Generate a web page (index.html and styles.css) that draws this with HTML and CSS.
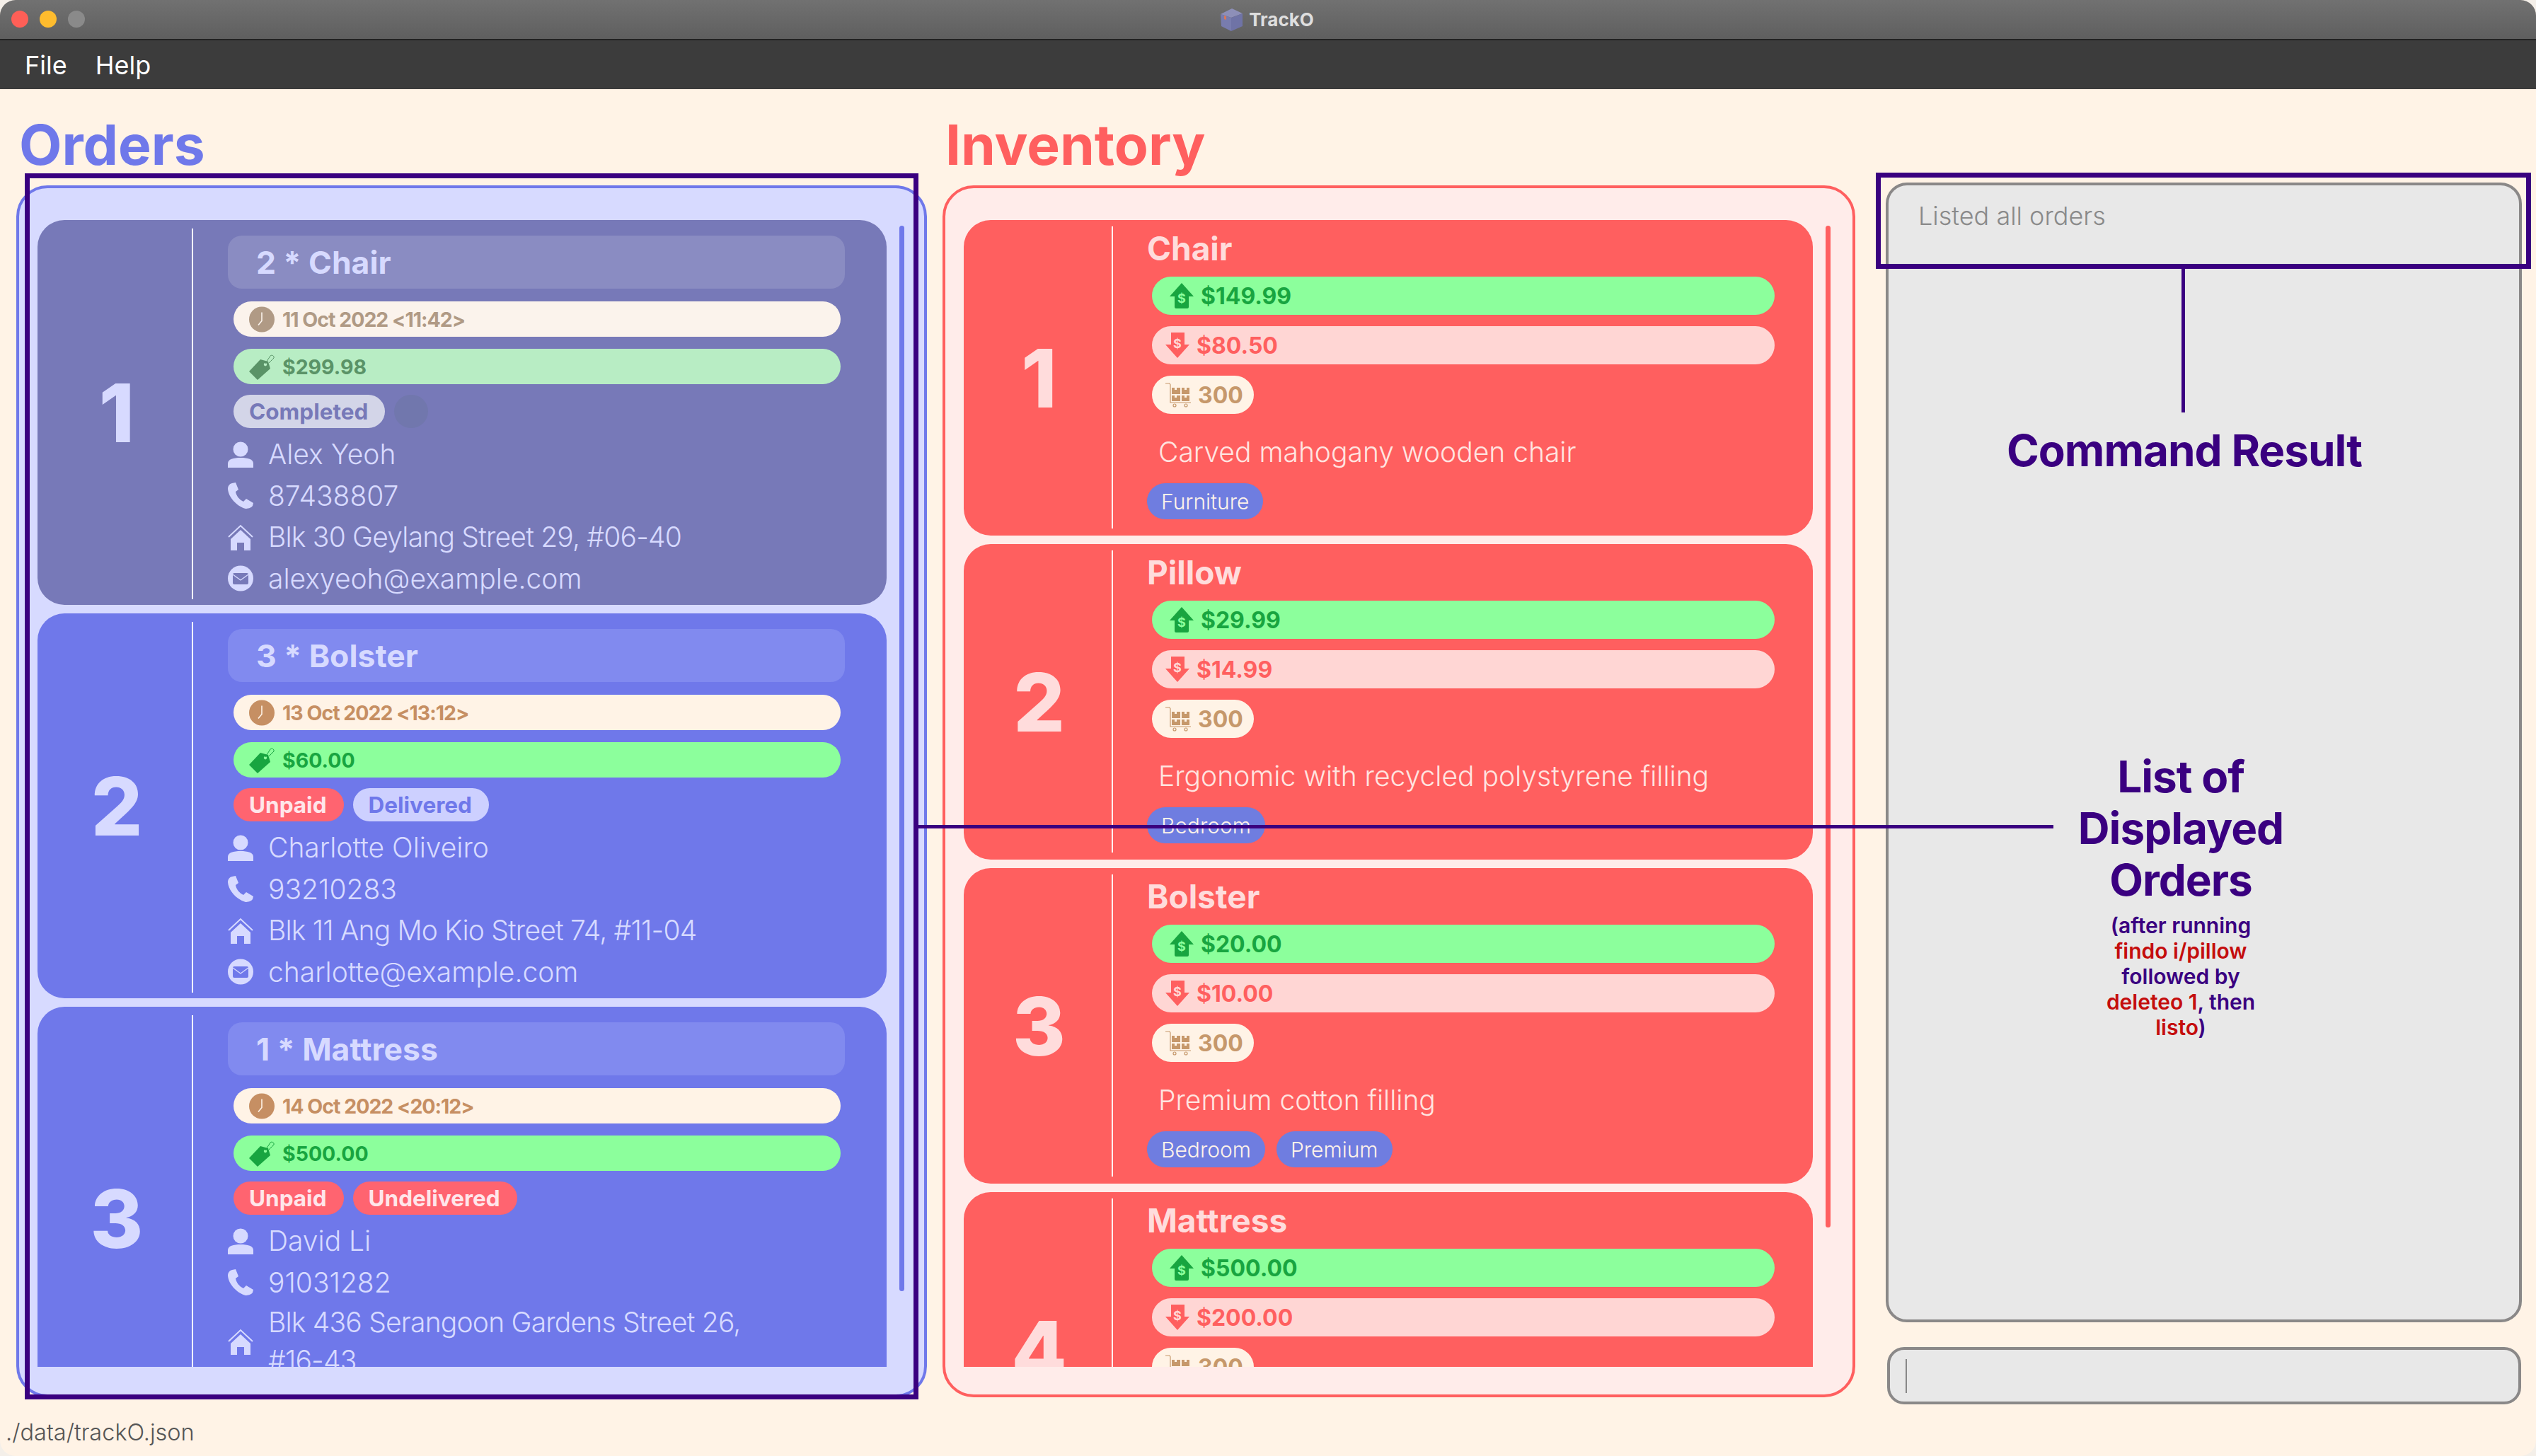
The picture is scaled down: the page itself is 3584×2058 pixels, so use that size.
FILE: index.html
```html
<!DOCTYPE html>
<html>
<head>
    <title>TrackO</title>
    <meta charset="UTF-8">
    <link rel="stylesheet" href="styles.css">
</head>
<body>
    <svg class="sprites" width="0" height="0">
        <symbol id="i-clock" viewBox="0 0 36 36">
            <circle cx="18" cy="18" r="18" fill="currentColor" />
            <path d="M18 8V20L13 26" fill="none" stroke="var(--cut)" stroke-width="1.6" />
        </symbol>
        <symbol id="i-tag" viewBox="0 0 36 37">
            <path fill="currentColor" fill-rule="evenodd" d="M0 25L16 8L27 11L30 21L12 37ZM23 13a2.2 2.2 0 1 0 .01 0Z" />
            <path d="M23 14L30 3C32 1 36 3 35 6L28 13" fill="none" stroke="currentColor" stroke-width="1" />
        </symbol>
        <symbol id="i-up" viewBox="0 0 34 36">
            <path fill="currentColor" d="M17 0L34 19H27V34Q27 36 25 36H9Q7 36 7 34V19H0Z" />
        </symbol>
        <symbol id="i-down" viewBox="0 0 34 36">
            <path fill="currentColor" d="M8 0H27V17H34L17 36L0 17H8Z" />
        </symbol>
        <symbol id="i-cart" viewBox="0 0 36 37">
            <path d="M0 2H6L7 4V29H36" fill="none" stroke="currentColor" stroke-width="1.2" />
            <path fill="currentColor" fill-rule="evenodd" d="M9 8H13V11H16V8H21V17H9ZM23 8H27V11H30V8H34V17H23ZM9 19H13V22H16V19H21V27H9ZM23 19H27V22H30V19H34V27H23Z" />
            <circle cx="13" cy="33" r="2" fill="none" stroke="currentColor" stroke-width="1.2" />
            <circle cx="29" cy="33" r="2" fill="none" stroke="currentColor" stroke-width="1.2" />
        </symbol>
        <symbol id="i-person" viewBox="0 0 36 37">
            <circle cx="18" cy="11" r="10.5" fill="currentColor" />
            <path fill="currentColor" d="M0 37V31C0 25 8 23 18 23C28 23 36 25 36 31V37Z" />
        </symbol>
        <symbol id="i-phone" viewBox="0 0 36 37">
            <path fill="currentColor" d="M6 1L11 0L15 10L11 13C12 19 16 24 22 27L26 23L36 29L35 33C33 36 28 37 25 37C12 33 1 21 0 9C0 5 2 2 6 1Z" />
        </symbol>
        <symbol id="i-house" viewBox="0 0 36 37">
            <path d="M1 18L18 2L35 18" fill="none" stroke="currentColor" stroke-width="2" />
            <path fill="currentColor" fill-rule="evenodd" d="M18 8L32 21V37H23V26H13V37H4V21Z" />
        </symbol>
        <symbol id="i-mail" viewBox="0 0 36 37">
            <circle cx="18" cy="18.5" r="18" fill="currentColor" />
            <rect x="7" y="11" width="22" height="16" rx="2" fill="var(--cut)" />
            <path d="M7 13L18 21L29 13" fill="none" stroke="currentColor" stroke-width="1.4" />
        </symbol>
    </svg>

    <div class="window">
        <div class="titlebar">
            <div class="traffic">
                <span class="dot red"></span>
                <span class="dot yellow"></span>
                <span class="dot grey"></span>
            </div>
            <div class="apptitle">
                <svg class="logo" viewBox="0 0 31 32">
                    <path fill="#8d8fb8" d="M0 8L16 0L31 7L15 13Z" />
                    <path fill="#787cae" d="M0 8L15 13V32L1 25Z" />
                    <path fill="#6f73a6" d="M15 13L31 7V25L15 32Z" />
                    <path fill="#d9775a" d="M5 10L8 11V16L5 15Z" />
                </svg>
                <span>TrackO</span>
            </div>
        </div>
        <div class="menubar">
            <span>File</span>
            <span>Help</span>
        </div>

        <div class="main">
            <div class="column">
                <h1 class="heading orders-heading">Orders</h1>
                <div class="panel orders-panel">
                    <div class="viewport">

                        <div class="card order-card selected">
                            <div class="card-index">1</div>
                            <div class="card-body">
                                <div class="order-title">2 * Chair</div>
                                <div class="pill date-pill"><svg class="pill-icon"><use href="#i-clock" /></svg>11 Oct 2022 &lt;11:42&gt;</div>
                                <div class="pill price-pill"><svg class="pill-icon"><use href="#i-tag" /></svg>$299.98</div>
                                <div class="status-row">
                                    <span class="status completed">Completed</span>
                                    <span class="status empty"></span>
                                </div>
                                <div class="info-row"><svg class="info-icon"><use href="#i-person" /></svg><span>Alex Yeoh</span></div>
                                <div class="info-row"><svg class="info-icon"><use href="#i-phone" /></svg><span>87438807</span></div>
                                <div class="info-row"><svg class="info-icon"><use href="#i-house" /></svg><span class="address">Blk 30 Geylang Street 29, #06-40</span></div>
                                <div class="info-row"><svg class="info-icon"><use href="#i-mail" /></svg><span>alexyeoh@example.com</span></div>
                            </div>
                        </div>

                        <div class="card order-card">
                            <div class="card-index">2</div>
                            <div class="card-body">
                                <div class="order-title">3 * Bolster</div>
                                <div class="pill date-pill"><svg class="pill-icon"><use href="#i-clock" /></svg>13 Oct 2022 &lt;13:12&gt;</div>
                                <div class="pill price-pill"><svg class="pill-icon"><use href="#i-tag" /></svg>$60.00</div>
                                <div class="status-row">
                                    <span class="status unpaid">Unpaid</span>
                                    <span class="status delivered">Delivered</span>
                                </div>
                                <div class="info-row"><svg class="info-icon"><use href="#i-person" /></svg><span>Charlotte Oliveiro</span></div>
                                <div class="info-row"><svg class="info-icon"><use href="#i-phone" /></svg><span>93210283</span></div>
                                <div class="info-row"><svg class="info-icon"><use href="#i-house" /></svg><span class="address">Blk 11 Ang Mo Kio Street 74, #11-04</span></div>
                                <div class="info-row"><svg class="info-icon"><use href="#i-mail" /></svg><span>charlotte@example.com</span></div>
                            </div>
                        </div>

                        <div class="card order-card tall-card">
                            <div class="card-index">3</div>
                            <div class="card-body">
                                <div class="order-title">1 * Mattress</div>
                                <div class="pill date-pill"><svg class="pill-icon"><use href="#i-clock" /></svg>14 Oct 2022 &lt;20:12&gt;</div>
                                <div class="pill price-pill"><svg class="pill-icon"><use href="#i-tag" /></svg>$500.00</div>
                                <div class="status-row">
                                    <span class="status unpaid">Unpaid</span>
                                    <span class="status unpaid">Undelivered</span>
                                </div>
                                <div class="info-row"><svg class="info-icon"><use href="#i-person" /></svg><span>David Li</span></div>
                                <div class="info-row"><svg class="info-icon"><use href="#i-phone" /></svg><span>91031282</span></div>
                                <div class="info-row"><svg class="info-icon"><use href="#i-house" /></svg><span class="address">Blk 436 Serangoon Gardens Street 26, #16-43</span></div>
                            </div>
                        </div>

                    </div>
                    <div class="thumb orders-thumb"></div>
                </div>
            </div>

            <div class="column">
                <h1 class="heading inventory-heading">Inventory</h1>
                <div class="panel inventory-panel">
                    <div class="viewport">

                        <div class="card item-card">
                            <div class="card-index">1</div>
                            <div class="card-body">
                                <div class="item-title">Chair</div>
                                <div class="pill sell-pill"><svg class="pill-icon arrow-icon" viewBox="0 0 34 36"><use href="#i-up" /><text x="17" y="28" class="icon-dollar">$</text></svg>$149.99</div>
                                <div class="pill cost-pill"><svg class="pill-icon arrow-icon" viewBox="0 0 34 36"><use href="#i-down" /><text x="17" y="22" class="icon-dollar">$</text></svg>$80.50</div>
                                <div class="pill qty-pill"><svg class="pill-icon"><use href="#i-cart" /></svg>300</div>
                                <div class="item-desc">Carved mahogany wooden chair</div>
                                <div class="tag-row"><span class="tag">Furniture</span></div>
                            </div>
                        </div>

                        <div class="card item-card">
                            <div class="card-index">2</div>
                            <div class="card-body">
                                <div class="item-title">Pillow</div>
                                <div class="pill sell-pill"><svg class="pill-icon arrow-icon" viewBox="0 0 34 36"><use href="#i-up" /><text x="17" y="28" class="icon-dollar">$</text></svg>$29.99</div>
                                <div class="pill cost-pill"><svg class="pill-icon arrow-icon" viewBox="0 0 34 36"><use href="#i-down" /><text x="17" y="22" class="icon-dollar">$</text></svg>$14.99</div>
                                <div class="pill qty-pill"><svg class="pill-icon"><use href="#i-cart" /></svg>300</div>
                                <div class="item-desc">Ergonomic with recycled polystyrene filling</div>
                                <div class="tag-row"><span class="tag">Bedroom</span></div>
                            </div>
                        </div>

                        <div class="card item-card">
                            <div class="card-index">3</div>
                            <div class="card-body">
                                <div class="item-title">Bolster</div>
                                <div class="pill sell-pill"><svg class="pill-icon arrow-icon" viewBox="0 0 34 36"><use href="#i-up" /><text x="17" y="28" class="icon-dollar">$</text></svg>$20.00</div>
                                <div class="pill cost-pill"><svg class="pill-icon arrow-icon" viewBox="0 0 34 36"><use href="#i-down" /><text x="17" y="22" class="icon-dollar">$</text></svg>$10.00</div>
                                <div class="pill qty-pill"><svg class="pill-icon"><use href="#i-cart" /></svg>300</div>
                                <div class="item-desc">Premium cotton filling</div>
                                <div class="tag-row"><span class="tag">Bedroom</span><span class="tag">Premium</span></div>
                            </div>
                        </div>

                        <div class="card item-card">
                            <div class="card-index">4</div>
                            <div class="card-body">
                                <div class="item-title">Mattress</div>
                                <div class="pill sell-pill"><svg class="pill-icon arrow-icon" viewBox="0 0 34 36"><use href="#i-up" /><text x="17" y="28" class="icon-dollar">$</text></svg>$500.00</div>
                                <div class="pill cost-pill"><svg class="pill-icon arrow-icon" viewBox="0 0 34 36"><use href="#i-down" /><text x="17" y="22" class="icon-dollar">$</text></svg>$200.00</div>
                                <div class="pill qty-pill"><svg class="pill-icon"><use href="#i-cart" /></svg>300</div>
                            </div>
                        </div>

                    </div>
                    <div class="thumb inventory-thumb"></div>
                </div>
            </div>

            <div class="column side-column">
                <div class="result-box">Listed all orders</div>
                <div class="command-box"><span class="caret"></span></div>
            </div>
        </div>

        <div class="statusbar">./data/trackO.json</div>

        <!-- annotations drawn over the app -->
        <div class="note-rect note-orders"></div>
        <div class="note-rect note-result"></div>
        <div class="note-line note-line-v"></div>
        <div class="note-line note-line-h"></div>
        <div class="note note-command">Command Result</div>
        <div class="note note-list">
            <div class="note-big">List of<br>Displayed<br>Orders</div>
            <div class="note-small">(after running<br><b>findo i/pillow</b><br>followed by<br><b>deleteo 1</b>, then<br><b>listo</b>)</div>
        </div>
    </div>
</body>
</html>
```

FILE: styles.css
```css
* {
    box-sizing: border-box;
}

html, body {
    margin: 0;
    height: 100%;
    background: #f4efe9;
}

body {
    font-family: Inter, "Noto Sans", sans-serif;
}

.sprites {
    position: absolute;
}

.window {
    position: relative;
    display: flex;
    flex-direction: column;
    width: 3584px;
    height: 2058px;
    overflow: hidden;
    background: #fff3e6;
    border-radius: 22px;
}

/* title bar and menu */
.titlebar {
    position: relative;
    display: flex;
    align-items: center;
    justify-content: center;
    height: 57px;
    background: linear-gradient(#717171, #5f5f5f);
    border-bottom: 2px solid #222;
}

.traffic {
    position: absolute;
    left: 16px;
    top: 15px;
    display: flex;
    gap: 16px;
}

.dot {
    width: 24px;
    height: 24px;
    border-radius: 50%;
}

.red { background: #ff5f57; }
.yellow { background: #febc2e; }
.grey { background: #8a8a8a; }

.apptitle {
    display: flex;
    align-items: center;
    gap: 9px;
    font-size: 26px;
    font-weight: 700;
    color: #dedede;
    margin-left: -2px;
}

.logo {
    width: 31px;
    height: 32px;
}

.menubar {
    display: flex;
    align-items: center;
    gap: 40px;
    height: 69px;
    padding-left: 35px;
    background: #3c3c3c;
    color: #fff;
    font-size: 36px;
    font-weight: 400;
}

/* main three columns */
.main {
    flex: 1;
    display: grid;
    grid-template-columns: 1287px 1290px 920px;
    column-gap: 22px;
    padding-left: 23px;
    min-height: 0;
}

.column {
    display: flex;
    flex-direction: column;
    padding-bottom: 25px;
    min-height: 0;
}

.heading {
    height: 136px;
    margin: 0;
    padding: 34px 0 0 4px;
    font-size: 78.5px;
    font-weight: 700;
    line-height: 90px;
}

.orders-heading { color: #6f78ea; }
.inventory-heading { color: #ff5f5f; }

.panel {
    flex: 1;
    display: flex;
    gap: 18px;
    min-height: 0;
    padding: 45px 0 39px 26px;
    border: 4px solid;
    border-radius: 44px;
}

.orders-panel {
    background: #d7daff;
    border-color: #6f78ea;
}

.inventory-panel {
    background: #ffecea;
    border-color: #ff5f5f;
}

.viewport {
    width: 1200px;
    height: 100%;
    overflow: hidden;
    flex-shrink: 0;
}

.thumb {
    width: 7px;
    margin-top: 8px;
    border-radius: 4px;
}

.orders-thumb {
    height: 1506px;
    background: #6f78ea;
}

.inventory-thumb {
    height: 1416px;
    background: #ff5f5f;
}

/* cards */
.card {
    display: flex;
    border-radius: 38px;
}

.order-card {
    margin-bottom: 12px;
    background: #6f78ea;
    color: #d7daff;
    --cut: #6f78ea;
}

.tall-card {
    height: 598px;
}

.item-card {
    height: 446px;
    margin-bottom: 12px;
    background: #ff5f5f;
    color: #ffdcdc;
}

.card-index {
    display: flex;
    align-items: center;
    justify-content: center;
    flex-shrink: 0;
    font-size: 114px;
    font-weight: 800;
    padding-left: 4px;
}

.order-card .card-index { width: 218px; padding-left: 6px; }
.item-card .card-index { width: 209px; }

.card-body {
    flex: 1;
    min-width: 0;
    margin: 12px 0 10px;
    border-left: 2px solid #fff;
}

.order-card .card-body {
    margin-bottom: 8px;
    padding: 10px 59px 0 49px;
}

.item-card .card-body {
    margin-top: 9px;
    padding: 0 54px 0 48px;
}

.order-title {
    display: flex;
    align-items: center;
    height: 75px;
    padding-left: 40px;
    margin-bottom: 18px;
    background: #818aef;
    border-radius: 20px;
    font-size: 44.5px;
    font-weight: 700;
}

.item-title {
    height: 71px;
    font-size: 46px;
    font-weight: 700;
    line-height: 62px;
}

/* pills */
.pill {
    display: flex;
    align-items: center;
    gap: 11px;
    border-radius: 27px;
    font-size: 28.5px;
    font-weight: 700;
    white-space: nowrap;
}

.date-pill {
    letter-spacing: -1px;
}

.pill-icon {
    width: 36px;
    height: 37px;
    flex-shrink: 0;
}

.arrow-icon {
    width: 34px;
    height: 36px;
}

.date-pill, .price-pill {
    height: 50px;
    margin: 0 6px 17px 8px;
    padding-left: 22px;
}

.price-pill {
    margin-bottom: 15px;
}

.date-pill {
    background: #fff3e6;
    color: #c68f63;
    --cut: #fff3e6;
}

.price-pill, .sell-pill {
    background: #8cff9c;
    color: #18a540;
    --cut: #8cff9c;
}

.sell-pill, .cost-pill, .qty-pill {
    height: 54px;
    margin: 0 0 16px 7px;
    gap: 10px;
    font-size: 32px;
}

.sell-pill { padding-left: 25px; }
.cost-pill { padding-left: 19px; }
.qty-pill { padding-left: 19px; width: 144px; }

.cost-pill {
    background: #ffd6d4;
    color: #ff5f5f;
    --cut: #ffd6d4;
}

.qty-pill {
    background: #fff3e6;
    color: #c6986b;
    --cut: #fff3e6;
}

.icon-dollar {
    font-family: Inter, sans-serif;
    font-size: 18px;
    font-weight: 700;
    letter-spacing: 0;
    text-anchor: middle;
    fill: var(--cut);
}

.status-row {
    display: flex;
    gap: 13px;
    height: 47px;
    margin: 0 6px 8px 8px;
}

.status {
    display: flex;
    align-items: center;
    padding: 0 24px 0 22px;
    border-radius: 24px;
    font-size: 31.5px;
    font-weight: 700;
}

.unpaid { background: #ff6470; color: #ffe6ea; }
.delivered { background: #cdd0ff; color: #6f78ea; }

/* name, phone, address, email */
.info-row {
    display: flex;
    align-items: center;
    gap: 21px;
    min-height: 58.5px;
    font-size: 39px;
    font-weight: 300;
    line-height: 54px;
}

.info-icon {
    width: 36px;
    height: 37px;
    flex-shrink: 0;
}

.address {
    max-width: 720px;
    letter-spacing: -0.8px;
}

.item-desc {
    height: 56px;
    margin: 26px 0 16px 16px;
    color: #ffe4e0;
    font-size: 39px;
    font-weight: 300;
    line-height: 56px;
}

.tag-row {
    display: flex;
    gap: 16px;
}

.tag {
    display: flex;
    align-items: center;
    height: 51px;
    padding: 0 20px;
    background: #6f7de0;
    color: #fff3ea;
    border-radius: 26px;
    font-size: 30px;
    font-weight: 300;
}

/* selected order is drawn washed out */
.order-card.selected {
    background: #7779b8;
    --cut: #fbf3ec;
}

.selected .order-title { background: #8a8cc2; }
.selected .date-pill { background: #fbf3ec; color: #b09a85; --cut: #fbf3ec; }
.selected .price-pill { background: #b8edc4; color: #5a9367; --cut: #b8edc4; }
.selected .info-row { --cut: #7779b8; }

.completed { background: #d3d5e8; color: #7779b8; }
.empty { width: 48px; background: #7177ad; }

/* right side */
.side-column {
    padding-top: 132px;
    padding-bottom: 15px;
    padding-left: 21px;
}

.result-box {
    flex: 1;
    padding: 21px 42px;
    background: #e8e8e8;
    border: 4px solid #8a8888;
    border-radius: 30px;
    color: #8a8a8a;
    font-size: 36px;
    font-weight: 300;
    line-height: 44px;
}

.command-box {
    display: flex;
    align-items: center;
    height: 81px;
    margin: 35px 1px 0 2px;
    padding-left: 22px;
    background: #e8e8e8;
    border: 4px solid #8a8888;
    border-radius: 24px;
}

.caret {
    width: 2px;
    height: 48px;
    background: #888;
}

.statusbar {
    height: 58px;
    padding-left: 8px;
    color: #555;
    font-size: 32.5px;
    font-weight: 300;
    line-height: 50px;
}

/* annotations */
.note-rect {
    position: absolute;
    border: 7px solid #3a0080;
}

.note-orders {
    left: 35px;
    top: 245px;
    width: 1263px;
    height: 1733px;
}

.note-result {
    left: 2651px;
    top: 244px;
    width: 926px;
    height: 136px;
}

.note-line {
    position: absolute;
    background: #3a0080;
}

.note-line-v {
    left: 3083px;
    top: 380px;
    width: 5px;
    height: 203px;
}

.note-line-h {
    left: 1296px;
    top: 1166px;
    width: 1606px;
    height: 5px;
}

.note {
    position: absolute;
    color: #3a0080;
    font-weight: 700;
    text-align: center;
}

.note-command {
    left: 2787px;
    top: 600px;
    width: 600px;
    font-size: 62px;
    line-height: 74px;
    letter-spacing: -1px;
}

.note-list {
    left: 2782px;
    top: 1061px;
    width: 600px;
}

.note-big {
    font-size: 62px;
    line-height: 73px;
    letter-spacing: -1px;
}

.note-small {
    margin-top: 10px;
    font-size: 30px;
    font-weight: 600;
    line-height: 36px;
}

.note-small b {
    color: #c40d0d;
    font-weight: 600;
}
```
